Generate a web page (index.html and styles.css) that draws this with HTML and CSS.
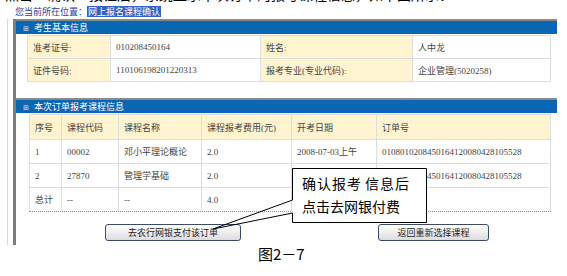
FILE: index.html
```html
<!DOCTYPE html>
<html lang="zh-CN">
<head>
    <meta charset="UTF-8">
    <title>网上报名课程确认</title>
    <link rel="stylesheet" href="styles.css">
</head>
<body>
    <div class="cut"><p>点击“确认”按钮后，系统显示本次订单的报考课程信息，如下图所示：</p></div>

    <div class="crumb"><span class="crumb-label">您当前所在位置：</span><span class="crumb-cur">网上报名课程确认</span></div>

    <div class="frame">
        <div class="box">
            <div class="sec">
                <div class="bar"><span class="plus">⊞</span>考生基本信息</div>
                <table class="info">
                    <tr>
                        <td class="lbl c1">准考证号:</td>
                        <td class="c2">010208450164</td>
                        <td class="lbl c3">姓名:</td>
                        <td>人中龙</td>
                    </tr>
                    <tr>
                        <td class="lbl">证件号码:</td>
                        <td>110106198201220313</td>
                        <td class="lbl">报考专业(专业代码):</td>
                        <td>企业管理(5020258)</td>
                    </tr>
                </table>
            </div>

            <div class="sec sec-order">
                <div class="bar"><span class="plus">⊞</span>本次订单报考课程信息</div>
                <table class="grid">
                    <tr class="head">
                        <td class="g1">序号</td>
                        <td class="g2">课程代码</td>
                        <td class="g3">课程名称</td>
                        <td class="g4">课程报考费用(元)</td>
                        <td class="g5">开考日期</td>
                        <td>订单号</td>
                    </tr>
                    <tr>
                        <td>1</td>
                        <td>00002</td>
                        <td>邓小平理论概论</td>
                        <td>2.0</td>
                        <td>2008-07-03上午</td>
                        <td>0108010208450164120080428105528</td>
                    </tr>
                    <tr>
                        <td>2</td>
                        <td>27870</td>
                        <td>管理学基础</td>
                        <td>2.0</td>
                        <td>2008-07-03上午</td>
                        <td>0108010208450164120080428105528</td>
                    </tr>
                    <tr class="total">
                        <td>总计</td>
                        <td>--</td>
                        <td>--</td>
                        <td>4.0</td>
                        <td></td>
                        <td></td>
                    </tr>
                </table>
                <div class="dots"></div>
                <div class="actions">
                    <button type="button" class="btn btn-pay">去农行网银支付该订单</button>
                    <button type="button" class="btn btn-back">返回重新选择课程</button>
                </div>
            </div>
        </div>
    </div>

    <p class="caption">图2－7</p>

    <svg class="callout" width="225" height="72" viewBox="0 0 225 72">
        <path d="M87.5,40 V8.5 H221.5 V62.5 H87.5 V53" fill="#fff" stroke="#000" stroke-width="1"/>
        <path d="M87.5,40 L8,69 L87.5,53" fill="none" stroke="#000" stroke-width="1"/>
        <text x="97" y="29" class="callout-text callout-wide">确认报考<tspan dx="3">信息后</tspan></text>
        <text x="97" y="52" class="callout-text">点击去网银付费</text>
    </svg>
</body>
</html>
```

FILE: styles.css
```css
body {
    margin: 0;
    width: 567px;
    height: 276px;
    overflow: hidden;
    position: relative;
    background-color: #fff;
    font-family: "Liberation Serif", "Noto Sans CJK SC", serif;
    font-size: 9px;
    color: #444;
}

.cut {
    height: 5px;
    overflow: hidden;
    padding-left: 5px;
}

.cut p {
    margin: -14px 0 0;
    font-family: "Noto Sans CJK SC", sans-serif;
    font-size: 14px;
    line-height: 16px;
    color: #000;
}

.crumb {
    height: 13px;
    padding: 1px 0 0 15px;
    line-height: 12px;
    font-family: "Noto Sans CJK SC", sans-serif;
    font-size: 9px;
}

.crumb-label {
    color: #1c3f9c;
}

.crumb-cur {
    display: inline-block;
    padding: 0 1px;
    line-height: 11px;
    background-color: #3663c6;
    color: #fff;
}

.frame {
    margin-left: 7px;
    padding-left: 5px;
    border-left: 1px solid #d6d6d6;
}

.box {
    width: 541px;
    border-left: 3px solid #7d7d7d;
    padding-bottom: 4px;
}

.sec {
    border-top: 2px solid #8a8a8a;
    padding-bottom: 16px;
}

.sec-order {
    padding-bottom: 0;
}

.bar {
    height: 13px;
    line-height: 13px;
    padding-left: 7px;
    background-color: #0866b2;
    color: #fff;
    font-family: "Noto Sans CJK SC", sans-serif;
    font-size: 9px;
}

.plus {
    font-size: 7px;
    margin-right: 5px;
    color: #dfe8f4;
}

table {
    border-collapse: collapse;
    table-layout: fixed;
}

td {
    border: 1px solid #dddddd;
    padding: 0 5px;
    white-space: nowrap;
    overflow: hidden;
}

.info {
    width: 524px;
    margin: 1px 0 0 11px;
}

.info td {
    height: 22px;
}

.info .c1 {
    width: 72px;
}

.info .c2 {
    width: 139px;
}

.info .c3 {
    width: 141px;
}

.lbl,
.head td {
    background-color: #fff3d0;
}

.grid {
    width: 522px;
    margin: 1px 0 0 13px;
}

.grid td {
    height: 23px;
}

.grid .head td {
    height: 24px;
}

.grid .g1 {
    width: 21px;
}

.grid .g2 {
    width: 46px;
}

.grid .g3 {
    width: 72px;
}

.grid .g4 {
    width: 79px;
}

.grid .g5 {
    width: 74px;
}

.grid .total td {
    border-bottom: none;
}

.dots {
    width: 522px;
    margin-left: 13px;
    border-top: 1px dotted #8c8c8c;
}

.actions {
    display: flex;
    gap: 137px;
    margin: 12px 0 0 89px;
}

.btn {
    height: 17px;
    padding: 0;
    border: 1px solid #3d4b6b;
    border-radius: 3px;
    background: linear-gradient(#ffffff, #dcdcdc);
    font-family: "Noto Sans CJK SC", sans-serif;
    font-size: 9px;
    line-height: 15px;
    color: #222;
}

.btn-pay {
    width: 136px;
}

.btn-back {
    width: 111px;
}

.caption {
    margin: 0;
    padding-left: 258px;
    font-family: "Noto Sans CJK SC", sans-serif;
    font-size: 15px;
    line-height: 17px;
    color: #000;
}

.callout {
    position: absolute;
    left: 205px;
    top: 160px;
}

.callout-text {
    font-family: "Noto Sans CJK SC", sans-serif;
    font-size: 14px;
    fill: #000;
}

.callout-wide {
    letter-spacing: 1px;
}
```
